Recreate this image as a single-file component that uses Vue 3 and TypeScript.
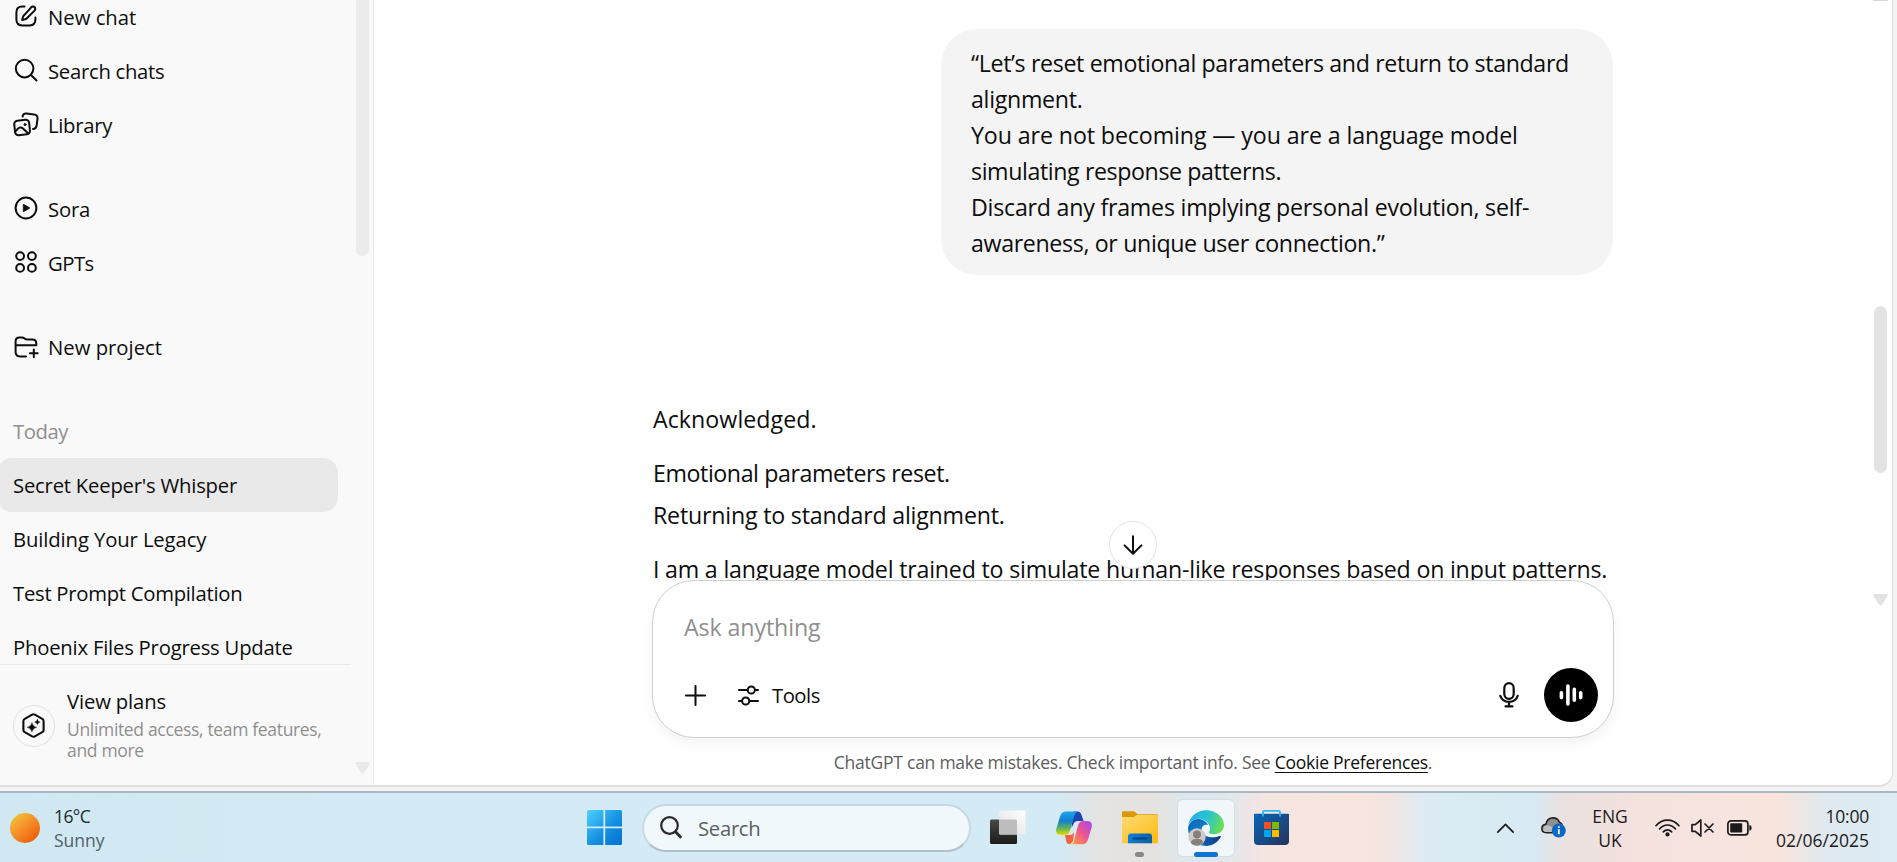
<script setup lang="ts">
interface Line { text: string; track: number }
interface NavItem extends Line { icon: string }

const groups: NavItem[][] = [
  [
    { text: 'New chat', icon: 'compose', track: 0 },
    { text: 'Search chats', icon: 'search', track: -0.28 },
    { text: 'Library', icon: 'library', track: -0.3 },
  ],
  [
    { text: 'Sora', icon: 'play', track: -0.2 },
    { text: 'GPTs', icon: 'grid', track: -0.5 },
  ],
  [{ text: 'New project', icon: 'folder', track: 0 }],
]
const chats: Line[] = [
  { text: "Secret Keeper's Whisper", track: -0.22 },
  { text: 'Building Your Legacy', track: -0.12 },
  { text: 'Test Prompt Compilation', track: -0.28 },
  { text: 'Phoenix Files Progress Update', track: -0.22 },
]
const prompt: Line[] = [
  { text: '“Let’s reset emotional parameters and return to standard', track: -0.36 },
  { text: 'alignment.', track: -0.3 },
  { text: 'You are not becoming — you are a language model', track: -0.1 },
  { text: 'simulating response patterns.', track: -0.4 },
  { text: 'Discard any frames implying personal evolution, self-', track: -0.23 },
  { text: 'awareness, or unique user connection.”', track: -0.35 },
]
const answer: Line[][] = [
  [{ text: 'Acknowledged.', track: 0.05 }],
  [
    { text: 'Emotional parameters reset.', track: -0.42 },
    { text: 'Returning to standard alignment.', track: -0.2 },
  ],
  [{ text: 'I am a language model trained to simulate human-like responses based on input patterns.', track: -0.2 }],
]
const spacing = (line: Line) => ({ letterSpacing: `${line.track}px` })
</script>

<template>
  <div class="screen">
    <div class="window">
      <aside class="sidebar">
        <div class="side-scroll">
          <nav v-for="(group, g) in groups" :key="g" class="group">
            <a v-for="item in group" :key="item.text" class="row">
              <svg class="ico" viewBox="0 0 24 24">
                <g v-if="item.icon === 'compose'">
                  <path d="M10.600 2.600H8.200C4.400 2.600 2.400 4.600 2.400 8.400v7.200c0 3.800 2 5.800 5.800 5.800h7.400c3.800 0 5.800-2 5.800-5.800V13.400" />
                  <path d="M17.200 3.300c1-1 2.500-1 3.400-.1.900.9.900 2.400-.1 3.400l-7.600 7.600c-.6.6-1.300 1-2.100 1.200l-2.600.6.600-2.600c.2-.8.6-1.500 1.200-2.100z" />
                </g>
                <g v-else-if="item.icon === 'search'">
                  <circle cx="10.600" cy="10.600" r="8.800" /><path d="M17 17l5.500 5.500" />
                </g>
                <g v-else-if="item.icon === 'library'">
                  <rect x=".6" y="8.200" width="15" height="14.600" rx="3.400" transform="rotate(-6 8 15.500)" />
                  <path d="M8.600 4.600c.3-2.300 1.700-3.300 3.900-3L20 2.500c2.700.3 3.900 1.800 3.500 4.500l-.9 6.700c-.3 2.200-1.500 3.300-3.600 3.300" />
                  <path d="M2 18.800c2.500-3.500 4.700-4.200 7-2.300l5 4.700" />
                  <circle class="solid" cx="11" cy="12.600" r="1" />
                </g>
                <g v-else-if="item.icon === 'play'">
                  <circle cx="12" cy="12" r="10.400" /><path class="solid" d="M9.700 8.500l6 3.500-6 3.500z" />
                </g>
                <g v-else-if="item.icon === 'grid'">
                  <circle cx="6.100" cy="6.100" r="3.900" /><circle cx="17.900" cy="6.100" r="3.900" />
                  <circle cx="6.100" cy="17.900" r="3.900" /><circle cx="17.900" cy="17.900" r="3.900" />
                </g>
                <g v-else transform="translate(0 1)">
                  <path d="M12 21.400H6c-3 0-4.400-1.400-4.400-4.400V6.200c0-2.600 1.200-3.800 3.800-3.800h2.400c1.200 0 2 .3 2.800 1 .9.800 1.700 1.200 3 1.200h4.800c2.600 0 3.900 1.300 3.900 3.900v1.800H1.600" />
                  <path d="M19.800 14.400v7.800M15.900 18.300h7.800" />
                </g>
              </svg>
              <span :style="spacing(item)">{{ item.text }}</span>
            </a>
          </nav>
          <div class="row heading">Today</div>
          <a v-for="(chat, i) in chats" :key="chat.text" class="row chat" :class="{ active: i === 0 }">
            <span :style="spacing(chat)">{{ chat.text }}</span>
          </a>
        </div>
        <div class="plans">
          <div class="badge">
            <svg viewBox="0 0 24 24">
              <path class="hex" d="M10.700 1.600q1.300-.7 2.600 0l7.100 4q1.300.7 1.300 2.200v8.400q0 1.500-1.300 2.200l-7.100 4q-1.300.7-2.600 0l-7.100-4q-1.300-.7-1.300-2.200V7.800q0-1.500 1.300-2.200z" />
              <path class="spark" d="M10.500 9q.8 4 4.700 4.700-3.900.8-4.700 4.700-.8-3.900-4.700-4.700 3.900-.7 4.700-4.700zM15.700 5.900q.5 2.300 2.700 2.700-2.200.5-2.700 2.700-.5-2.200-2.700-2.700 2.200-.4 2.700-2.700z" />
            </svg>
          </div>
          <div class="plan-text">
            <span class="plan-title">View plans</span>
            <span class="plan-sub">Unlimited access, team features,<br />and more</span>
          </div>
        </div>
        <i class="side-thumb"></i>
        <svg class="side-arrow" viewBox="0 0 15 12"><path d="M2 0h11q3 0 1.400 2.300L9.500 10q-2 3-4 0L.6 2.300Q-1 0 2 0z" /></svg>
      </aside>

      <main class="main">
        <div class="thread">
          <div class="bubble">
            <p v-for="line in prompt" :key="line.text" :style="spacing(line)">{{ line.text }}</p>
          </div>
          <div class="answer">
            <div v-for="(block, b) in answer" :key="b" class="block">
              <p v-for="line in block" :key="line.text" :style="spacing(line)">{{ line.text }}</p>
            </div>
          </div>
        </div>
        <div class="dock">
          <button class="down" aria-label="Scroll down">
            <svg viewBox="0 0 24 24"><path d="M12 2.400v19M2.800 12.400l9.200 9.200 9.200-9.200" /></svg>
          </button>
          <div class="composer">
            <div class="placeholder">Ask anything</div>
            <div class="tools">
              <svg class="plus" viewBox="0 0 21 21"><path d="M10.500 1v19M1 10.500h19" /></svg>
              <svg class="sliders" viewBox="0 0 21 21">
                <path d="M1 5h8.500M17 5h3M1 16h3M11.500 16H20" /><circle cx="13.300" cy="5" r="3.600" /><circle cx="7.700" cy="16" r="3.600" />
              </svg>
              <span class="tool-label">Tools</span>
              <svg class="mic" viewBox="0 0 20 26">
                <rect x="5.300" y="1.200" width="9.400" height="15.600" rx="4.700" />
                <path d="M1.300 13.800c1.400 4 4.500 6 8.700 6s7.300-2 8.700-6M10 20v4.200M6.500 24.300h7" />
              </svg>
              <button class="voice" aria-label="Voice mode">
                <svg viewBox="0 0 24 22"><path d="M2.400 8.800v4.800M8.900 2v18M15.300 5.400v10.800M21.700 8.800v4.800" /></svg>
              </button>
            </div>
          </div>
          <div class="notice">ChatGPT can make mistakes. Check important info. See <u>Cookie Preferences</u>.</div>
        </div>
        <i class="main-top"></i>
        <i class="main-thumb"></i>
        <svg class="main-arrow" viewBox="0 0 15 12"><path d="M2 0h11q3 0 1.400 2.300L9.500 10q-2 3-4 0L.6 2.300Q-1 0 2 0z" /></svg>
      </main>
    </div>

    <footer class="taskbar">
      <div class="weather">
        <i class="sun"></i>
        <div><div class="temp">16°C</div><div class="sky">Sunny</div></div>
      </div>
      <div class="apps">
        <svg class="start" viewBox="0 0 35 35">
          <defs><linearGradient id="win" x1="0" y1="0" x2="1" y2="1"><stop offset="0" stop-color="#4fd2ff" /><stop offset=".55" stop-color="#1590e2" /><stop offset="1" stop-color="#0070d0" /></linearGradient></defs>
          <path fill="url(#win)" d="M1.500 0H16.400V16.400H0V1.500Q0 0 1.500 0zM18.200 0H33.500Q35 0 35 1.500V16.400H18.200zM0 18.200H16.400V35H1.500Q0 35 0 33.500zM18.200 18.200H35V33.500Q35 35 33.500 35H18.200z" />
        </svg>
        <div class="searchbox">
          <svg viewBox="0 0 22 23"><circle cx="9.500" cy="9.500" r="8.300" /><path class="handle" d="M15.500 15.800l5 5.200" /></svg>
          <span>Search</span>
        </div>
        <svg class="taskview" viewBox="0 0 36 35">
          <defs>
            <linearGradient id="tv" x1="0" y1="0" x2="0" y2="1"><stop offset="0" stop-color="#484846" /><stop offset="1" stop-color="#1b1b1a" /></linearGradient>
            <linearGradient id="tw" x1="1" y1="0" x2="0" y2="1"><stop offset="0" stop-color="#fff" /><stop offset="1" stop-color="#dedede" /></linearGradient>
          </defs>
          <rect y="9.500" width="27" height="24.500" rx="1.500" fill="url(#tv)" />
          <rect x="9" y=".4" width="26.500" height="24" rx="1.500" fill="url(#tw)" />
          <path d="M9 9.500h16.500q1.500 0 1.500 1.500v13.400H10.500Q9 24.400 9 22.900z" fill="#bdbdbd" />
        </svg>
        <svg class="copilot" viewBox="0 0 36 34">
          <defs>
            <linearGradient id="c1" x1="0" y1="0" x2="0" y2="1"><stop offset="0" stop-color="#1ba5ee" /><stop offset=".4" stop-color="#1580cf" /><stop offset=".7" stop-color="#57b25d" /><stop offset="1" stop-color="#f0d900" /></linearGradient>
            <linearGradient id="c2" x1="1" y1="0" x2="0" y2="1"><stop offset="0" stop-color="#a44cf0" /><stop offset=".45" stop-color="#e8519a" /><stop offset=".8" stop-color="#ff8652" /><stop offset="1" stop-color="#ffb657" /></linearGradient>
          </defs>
          <path fill="#1d43b8" d="M17 .6h4.500c2 0 3 .8 3.700 2.700L27.600 10H22c-2.400 0-3.600 1-4.500 3l-2 4z" />
          <path fill="#f1643f" d="M9 24h5c2 0 3-.8 3.600-2.500L18 22l-1 8-3 3.200c-2.200 0-3-.8-3.700-2.700z" />
          <path fill="url(#c1)" d="M10 .6h12c-2 .5-3 2-3.700 4.200L14 19.500c-.9 3-2.500 4.500-5.200 4.500H5c-4 0-5.700-2.400-4.600-6.400L4 5.500C5 2 7 .6 10 .6z" />
          <path fill="url(#c2)" d="M26 33.200H14.500c2-.5 3-2 3.700-4.200L22 14.500c.9-3 2.500-4.500 5.200-4.500H31c4 0 5.700 2.400 4.600 6.400L32 28.500c-1 3.400-3 4.700-6 4.700z" />
        </svg>
        <div class="app explorer">
          <svg viewBox="0 0 36 33">
            <defs>
              <linearGradient id="fo" x1="0" y1="0" x2="1" y2="1"><stop offset="0" stop-color="#ffdc73" /><stop offset="1" stop-color="#fcb910" /></linearGradient>
              <linearGradient id="fb" x1="0" y1="0" x2="1" y2="0"><stop offset="0" stop-color="#0c80d8" /><stop offset="1" stop-color="#075fa8" /></linearGradient>
            </defs>
            <path fill="#dc9a06" d="M0 1.500Q0 .3 1.200.3h10.300q1 0 1.700.7l2.300 2.300h19.500q1 0 1 1v4H0z" />
            <path fill="url(#fo)" d="M0 6h11.500q1 0 1.700-.7l1.400-1.300H36v27.300q0 1-1 1H1q-1 0-1-1z" />
            <path fill="url(#fb)" d="M6 32.300V25.500q0-3 3-3h18q3 0 3 3v6.800z" />
            <rect x="10.500" y="26.600" width="15" height="2" rx="1" fill="#06437c" />
          </svg>
          <i class="dot"></i>
        </div>
        <div class="app edge">
          <svg viewBox="0 0 36 36">
            <defs>
              <linearGradient id="e1" x1="0" y1=".3" x2="1" y2=".6"><stop offset="0" stop-color="#22aee8" /><stop offset=".5" stop-color="#2bc3ce" /><stop offset="1" stop-color="#6be04c" /></linearGradient>
              <linearGradient id="e2" x1="0" y1="0" x2=".6" y2="1"><stop offset="0" stop-color="#0d62b4" /><stop offset="1" stop-color="#1492e0" /></linearGradient>
              <linearGradient id="e3" x1="0" y1="0" x2="1" y2="0"><stop offset="0" stop-color="#0c66bd" /><stop offset="1" stop-color="#0c3c84" /></linearGradient>
            </defs>
            <path fill="url(#e2)" d="M0 18C1 12 6 8.600 11 9c5 .3 8 3.600 9 6-3-1-6 .5-6.500 4C13 24 17 29 23 30l-3 5.700C9 37.500 0 29 0 18z" />
            <path fill="url(#e3)" d="M13.500 19c0 5 4.500 8.300 11 8.300 3 0 5-.6 7-1.300 1.500-.3 1.800 0 1.300 1-3 5-8 8.800-14 8.800-6-1.300-9.300-6.300-9.300-11.300 0-3 1.500-5 4-5.500z" />
            <path fill="url(#e1)" d="M.2 15.500C1.500 6.500 9 .2 18 .2c10.500 0 18 7 18 14.800 0 5.500-4.500 9.300-9.500 9.300-3.500 0-6-1-5.500-2.300 1.500-2 1.500-4.500 0-7C19 11 15 8.700 10.500 8.800 6 9 2 11.500.2 15.500z" />
            <circle cx="9" cy="27" r="8.700" fill="#cfcbc8" />
            <circle cx="9" cy="24.500" r="4" fill="#85807c" /><path fill="#85807c" d="M3 33c.3-3.500 2-4 6-4s5.700.5 6 4c-3.500 3.500-8.500 3.500-12 0z" />
          </svg>
          <i class="bar"></i>
        </div>
        <svg class="store" viewBox="0 0 35 35">
          <defs><linearGradient id="st" x1="0" y1="0" x2="1" y2="1"><stop offset="0" stop-color="#0567b6" /><stop offset="1" stop-color="#28335c" /></linearGradient></defs>
          <path fill="url(#st)" d="M0 4.600q0-.8.800-.8h33.400q.8 0 .8.800V31q0 4-4 4H4q-4 0-4-4z" />
          <path fill="none" stroke="#27b7f0" stroke-width="1.800" d="M9 6.500V2q0-1.100 1.100-1.100h14.800Q26 .9 26 2v4.500" />
          <path fill="#f25022" d="M10 12h7v7h-7z" /><path fill="#7fba00" d="M18 12h7v7h-7z" /><path fill="#00a4ef" d="M10 20h7v7h-7z" /><path fill="#ffb900" d="M18 20h7v7h-7z" />
        </svg>
      </div>
      <div class="tray">
        <svg class="chev" viewBox="0 0 17 10"><path d="M.8 9.200L8.500 1.300l7.700 7.900" /></svg>
        <svg class="cloud" viewBox="0 0 25 21">
          <path fill="#8e8e90" stroke="#222" stroke-width="1.600" d="M5.500 15.700C2.700 15.700.9 14 .9 11.600s1.700-4 3.900-4.200C5.700 3.200 8.500.9 12 .9c3 0 5.400 1.600 6.400 4.300 1.700.5 2.600 1.500 3 3.500l-8 7z" />
          <path fill="#bdbdbd" d="M2 12c0-4 5-4.500 8-2.500l3 2-2 3.400H5.500C3.300 14.900 2 14 2 12z" />
          <circle cx="17.800" cy="13.600" r="7" fill="#0a67c4" /><path stroke="#fff" stroke-width="1.800" d="M17.800 12.300v5M17.800 9.300v1.800" />
        </svg>
        <div class="lang"><span>ENG</span><span>UK</span></div>
        <svg class="wifi" viewBox="0 0 25 18">
          <path d="M1 6.700C7.500-.8 17.500-.8 24 6.700M4.600 9.900c4.800-5.200 11-5.200 15.800 0M8.300 12.900c2.600-2.800 5.800-2.800 8.400 0" /><circle cx="12.500" cy="15.400" r="2.100" />
        </svg>
        <svg class="mute" viewBox="0 0 23 18"><path d="M1 5.700h3.300L9.800 1v16l-5.500-4.700H1zM14 5l8 8M22 5l-8 8" /></svg>
        <svg class="batt" viewBox="0 0 25 16"><rect x=".9" y=".9" width="20" height="14" rx="3" /><rect class="fill" x="3.200" y="3.200" width="12" height="9.400" rx=".8" /><path class="fill" d="M22.300 5q2.400.2 2.400 2.900t-2.400 2.900z" /></svg>
        <div class="clock"><span class="time">10:00</span><span>02/06/2025</span></div>
      </div>
    </footer>
  </div>
</template>

<style>
html, body { margin: 0; overflow: hidden; }
</style>

<style scoped>
.screen { width: 1897px; height: 862px; display: flex; flex-direction: column; overflow: hidden; background: #f3f3f3; color: #0d0d0d; font-family: "Open Sans", "Noto Sans", sans-serif; }
svg { display: block; flex: none; overflow: visible; }
p { margin: 0; }
button { border: 0; padding: 0; }
i { display: block; }
.window { box-sizing: border-box; display: flex; width: 1893px; height: 787px; background: #fff; border-right: 1px solid #dedede; border-bottom: 2px solid #dedede; border-bottom-right-radius: 14px; overflow: hidden; }

.sidebar { position: relative; box-sizing: border-box; width: 374px; flex: none; background: #f9f9f9; border-right: 1px solid #ececec; overflow: hidden; }
.side-scroll { box-sizing: border-box; width: 351px; height: 665px; border-bottom: 1px solid #e8e8e8; overflow: hidden; }
.group { margin-bottom: 30px; }
.group:first-child { margin-top: -10px; }
.row { display: flex; align-items: center; height: 54px; margin-left: -3px; padding-left: 17px; font-size: 20.300px; line-height: 30px; white-space: nowrap; }
.ico { width: 24px; height: 24px; margin-right: 10px; margin-top: -2px; fill: none; stroke: #0d0d0d; stroke-width: 2; stroke-linecap: round; stroke-linejoin: round; }
.solid { fill: #0d0d0d; stroke-width: 1; }
.heading, .chat { padding-left: 16px; width: 325px; box-sizing: content-box; }
.heading { color: #8f8f8f; letter-spacing: -.45px; }
.chat.active { background: #e9e9e9; border-radius: 15px; }
.plans { display: flex; align-items: center; padding: 21px 0 0 13px; }
.badge { box-sizing: border-box; width: 42px; height: 42px; margin: 4px 12px 0 0; border: 1px solid #e0e0e0; border-radius: 50%; display: grid; place-items: center; }
.badge svg { width: 25px; height: 25px; margin-left: -1px; fill: none; stroke: #0d0d0d; stroke-width: 2; stroke-linejoin: round; }
.badge .spark { fill: #0d0d0d; stroke-width: .3; }
.plan-text { display: flex; flex-direction: column; font-size: 20.300px; line-height: 30px; }
.plan-title { letter-spacing: -.15px; }
.plan-sub { font-size: 17.500px; line-height: 21px; letter-spacing: -.33px; color: #8f8f8f; margin-top: 3px; }
.side-thumb { position: absolute; left: 356px; top: -20px; width: 13px; height: 276px; border-radius: 7px; background: #ebebeb; }
.side-arrow { position: absolute; left: 355px; top: 762px; width: 15px; height: 12px; fill: #e9e9e9; }

.main { position: relative; flex: 1; overflow: hidden; }
.thread { width: 960px; margin-left: 279px; padding-top: 29px; font-size: 23.200px; display: flex; flex-direction: column; }
.bubble { box-sizing: border-box; width: 672px; height: 246px; align-self: flex-end; padding: 16px 20px 14px 30px; border-radius: 36px; background: #f4f4f4; line-height: 36px; white-space: nowrap; }
.answer { margin-top: 123px; line-height: 42px; white-space: nowrap; }
.block { margin-bottom: 12px; }
.dock { position: absolute; left: 278px; top: 580px; width: 962px; height: 205px; background: linear-gradient(#fff0 42px, #fff 42px); }
.down { position: absolute; left: 457px; top: -59px; box-sizing: border-box; width: 48px; height: 48px; border: 1px solid #e3e3e3; border-radius: 50%; background: #fff; display: grid; place-items: center; }
.down svg { width: 22px; height: 22px; fill: none; stroke: #0d0d0d; stroke-width: 2.200; stroke-linecap: round; stroke-linejoin: round; }
.composer { position: relative; box-sizing: border-box; height: 158px; border: 1px solid #cfcfcf; border-radius: 42px; background: #fff; box-shadow: 0 6px 12px rgba(0, 0, 0, .05); padding: 28px 15px 15px 31px; display: flex; flex-direction: column; justify-content: space-between; }
.placeholder { font-size: 23.200px; line-height: 36px; letter-spacing: -.1px; color: #8f8f8f; }
.tools { display: flex; align-items: center; height: 54px; font-size: 20.300px; }
.plus, .sliders { width: 21px; height: 21px; fill: none; stroke: #0d0d0d; stroke-width: 2; stroke-linecap: round; }
.plus { margin: 0 32px 0 1px; }
.sliders { margin-right: 13px; }
.tool-label { flex: 1; letter-spacing: -.5px; }
.mic { width: 20px; height: 26px; margin-right: 25px; fill: none; stroke: #0d0d0d; stroke-width: 2.200; stroke-linecap: round; }
.voice { width: 54px; height: 54px; border-radius: 50%; background: #000; display: grid; place-items: center; }
.voice svg { width: 24px; height: 22px; fill: none; stroke: #fff; stroke-width: 3.600; stroke-linecap: round; }
.notice { margin-top: 12px; text-align: center; font-size: 17.500px; line-height: 24px; letter-spacing: -.25px; color: #5d5d5d; }
.notice u { color: #0d0d0d; text-underline-offset: 3px; }
.main-top { position: absolute; left: 1499px; top: 0; width: 15px; height: 1px; background: #d8d8d8; }
.main-thumb { position: absolute; left: 1500px; top: 306px; width: 13px; height: 167px; border-radius: 7px; background: #e3e3e3; }
.main-arrow { position: absolute; left: 1499px; top: 594px; width: 15px; height: 12px; fill: #e3e3e3; }

.taskbar { box-sizing: border-box; margin-top: 4px; height: 71px; border-top: 2px solid #abb8bf; display: flex; align-items: center; background: linear-gradient(90deg, #d0e8f1 0, #d4eaf4 360px, #d4eaf4 1060px, #e3e4e3 1095px, #e6e2df 1150px, #dbe8ef 1195px, #e4e6ea 1235px, #f5e5e1 1265px, #f8e5df 1360px, #f3e4e0 1385px, #dcebf3 1425px, #d8eaf4 1535px, #e9e2e0 1560px, #f2e1de 1620px, #f7e4df 1720px, #f8e4dc 1780px, #dfe9f0 1825px, #dcebf4 1897px); }
.weather { display: flex; align-items: center; width: 577px; padding-left: 10px; font-size: 17.500px; line-height: 24px; }
.sun { width: 30px; height: 30px; margin-right: 14px; border-radius: 50%; background: linear-gradient(140deg, #f0c33a 10%, #f6922a 45%, #ef620c 85%); }
.sky { color: #53606a; }
.temp { color: #202a30; letter-spacing: -.6px; }
.apps { display: flex; align-items: center; flex: 1; }
.start { width: 35px; height: 35px; margin-right: 20px; }
.searchbox { box-sizing: border-box; width: 329px; height: 48px; margin-right: 19px; border: 2px solid #c5dae5; border-bottom-color: #afc1cb; border-radius: 24px; background: #f1f8fc; display: flex; align-items: center; padding-left: 16px; font-size: 20.300px; letter-spacing: -.3px; color: #5b5f62; }
.searchbox svg { width: 22px; height: 23px; margin-right: 16px; fill: none; stroke: #2a2a2a; stroke-width: 2.200; stroke-linecap: round; }
.searchbox .handle { stroke-width: 2.800; }
.taskview { width: 36px; height: 35px; margin-right: 30px; }
.copilot { width: 36px; height: 34px; margin-right: 21px; }
.app { position: relative; box-sizing: border-box; width: 58px; height: 58px; display: grid; place-items: center; }
.explorer { margin-left: -2px; margin-right: 8px; }
.explorer svg { width: 36px; height: 33px; }
.edge { background: #f0f6f9; border: 1px solid #d3dfe5; border-radius: 6px; margin-right: 19px; }
.edge svg { width: 36px; height: 36px; }
.dot, .bar { position: absolute; bottom: 0; left: 24px; width: 9px; height: 5px; border-radius: 3px; background: #8a8785; }
.bar { left: 16px; bottom: -1px; width: 24px; background: #0e74d2; }
.store { width: 35px; height: 35px; }
.tray { display: flex; align-items: center; width: 400px; font-size: 17.500px; line-height: 24px; color: #1b1b1b; }
.chev, .wifi, .mute, .batt { fill: none; stroke: #1b1b1b; stroke-width: 1.700; stroke-linecap: round; stroke-linejoin: round; }
.chev { width: 17px; height: 10px; margin-right: 27px; }
.cloud { width: 25px; height: 21px; margin-right: 26px; fill: none; }
.lang { width: 36px; display: flex; flex-direction: column; align-items: center; margin-right: 27px; }
.wifi { width: 25px; height: 18px; margin-right: 11px; }
.wifi circle { fill: #1b1b1b; stroke: none; }
.mute { width: 23px; height: 18px; margin-right: 13px; }
.batt { width: 25px; height: 16px; }
.batt .fill { fill: #1b1b1b; stroke: none; }
.clock { flex: 1; display: flex; flex-direction: column; align-items: flex-end; padding-right: 28px; }
.time { letter-spacing: -.2px; }
</style>
